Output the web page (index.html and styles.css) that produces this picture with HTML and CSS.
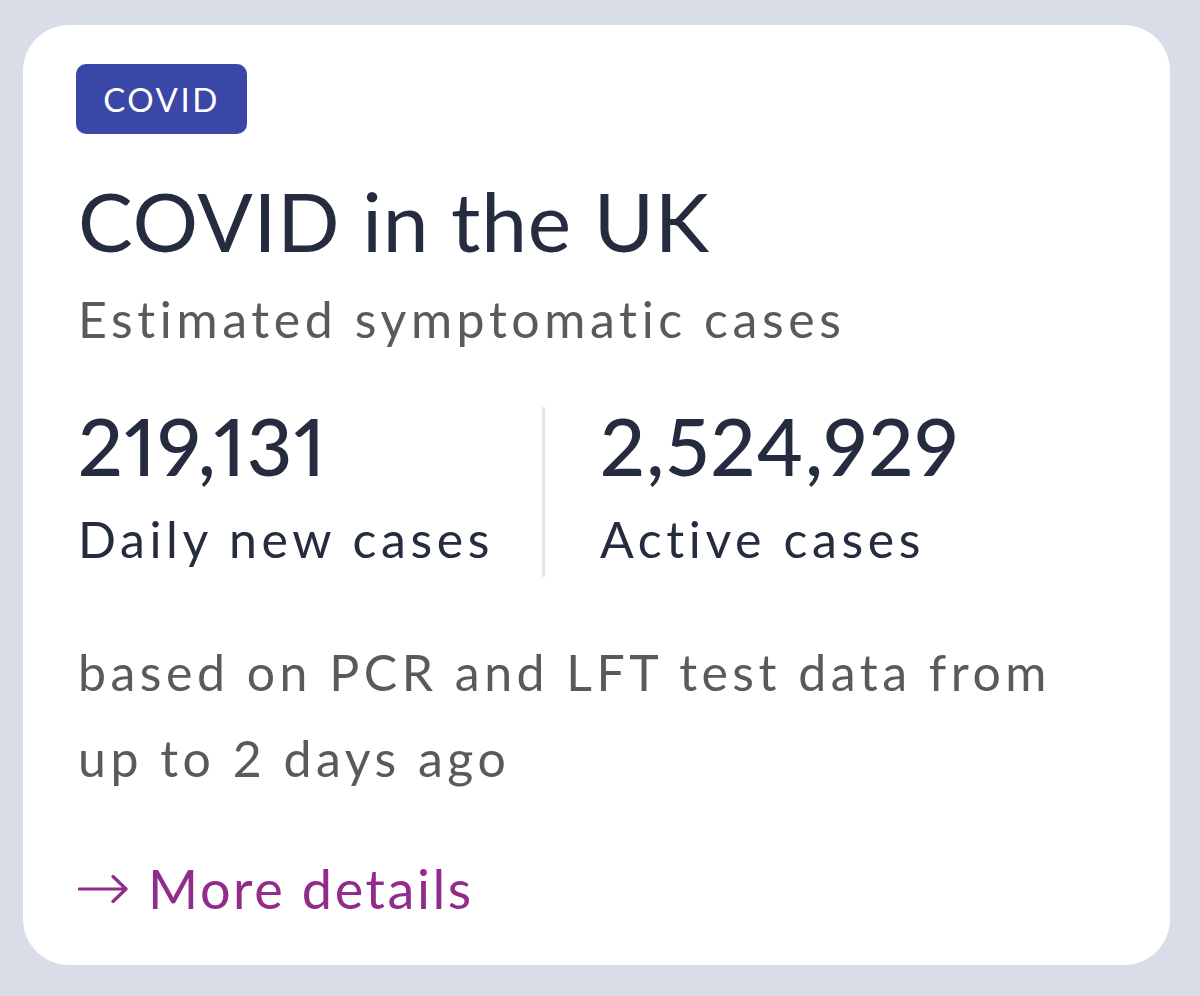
FILE: index.html
```html
<!DOCTYPE html>
<html lang="en">
<head>
<meta charset="utf-8">
<title>COVID in the UK</title>
<link rel="stylesheet" href="styles.css">
</head>
<body>
<div class="card">
  <span class="badge">COVID</span>
  <h1 class="title">COVID in the UK</h1>
  <p class="subtitle">Estimated symptomatic cases</p>
  <div class="stats">
    <div class="stat stat-first">
      <div class="stat-value">219,131</div>
      <div class="stat-label">Daily new cases</div>
    </div>
    <div class="stat stat-second">
      <div class="stat-value">2,524,929</div>
      <div class="stat-label">Active cases</div>
    </div>
  </div>
  <p class="note">based on PCR and LFT test data from up to 2 days ago</p>
  <a class="more" href="#"><svg class="arrow" width="50" height="28" viewBox="0 0 50 28" aria-hidden="true"><path d="M1 14 H48 M35 1.5 L48 14 L35 26.5" fill="none" stroke="#922c8c" stroke-width="3.2" stroke-linecap="round" stroke-linejoin="round"/></svg><span>More details</span></a>
</div>
</body>
</html>
```

FILE: styles.css
```css
html, body {
  margin: 0;
  padding: 0;
}
body {
  background: #d9dde8;
  font-family: Lato, "Noto Sans", sans-serif;
  padding: 25px 30px 31px 23px;
  width: 1147px;
}
.card {
  background: #ffffff;
  border-radius: 46px;
  padding: 39px 55px 51px 55px;
  height: 850px;
  display: flex;
  flex-direction: column;
  align-items: flex-start;
}
.card > * {
  flex-shrink: 0;
}
.badge {
  display: flex;
  align-items: center;
  justify-content: center;
  width: 171px;
  height: 70px;
  margin-left: -2px;
  border-radius: 10px;
  background: #3b47a6;
  color: #ffffff;
  font-size: 33px;
  letter-spacing: 2.5px;
  box-sizing: border-box;
}
.title {
  margin: 45px 0 0 0;
  font-size: 82px;
  line-height: 82px;
  font-weight: 400;
  letter-spacing: 0.8px;
  color: #262c3f;
}
.subtitle {
  margin: 34px 0 0 0;
  font-size: 50px;
  line-height: 48px;
  letter-spacing: 4.6px;
  color: #575b5e;
}
.stats {
  margin-top: 64px;
  display: flex;
}
.stat {
  padding-top: 0;
  padding-bottom: 14px;
  white-space: nowrap;
}
.stat-first {
  width: 410px;
  padding-right: 54px;
  border-right: 3px solid #e6e6e6;
}
.stat-second {
  padding-left: 55px;
}
.stat-value {
  font-size: 79px;
  line-height: 78px;
  font-weight: 500;
  font-variant-numeric: proportional-nums;
  letter-spacing: 1.5px;
  color: #262c3f;
}
.stat-label {
  margin-top: 30px;
  font-size: 50px;
  line-height: 48px;
  letter-spacing: 4.6px;
  color: #262c3f;
}
.note {
  margin: 52px 0 0 0;
  width: 1010px;
  font-size: 50px;
  line-height: 86px;
  letter-spacing: 4.5px;
  color: #575b5e;
}
.more {
  margin-top: 62px;
  display: flex;
  align-items: center;
  gap: 20px;
  font-size: 54px;
  line-height: 52px;
  letter-spacing: 2.6px;
  color: #922c8c;
  text-decoration: none;
}
.arrow {
  display: block;
  flex: none;
}
```
